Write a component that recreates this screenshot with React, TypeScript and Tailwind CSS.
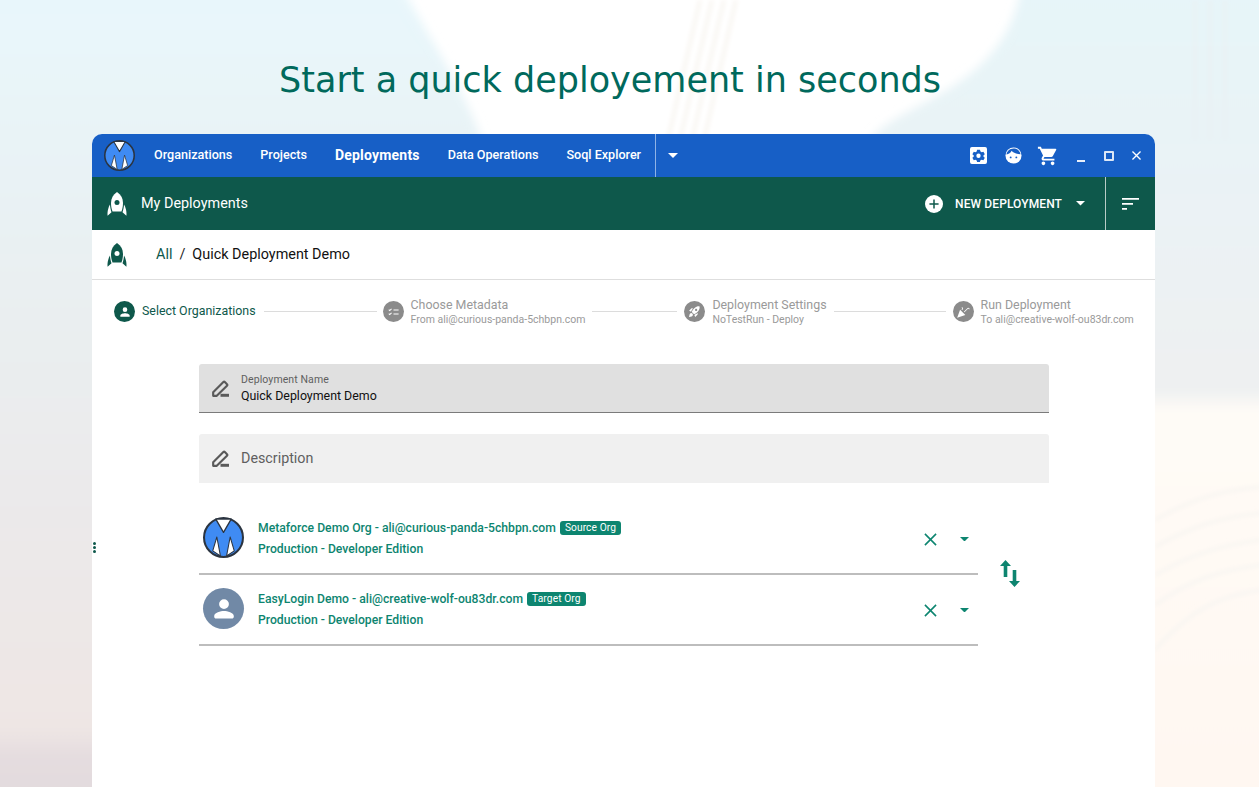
import React from 'react';

const navItems = [
  { label: 'Organizations', active: false },
  { label: 'Projects', active: false },
  { label: 'Deployments', active: true },
  { label: 'Data Operations', active: false },
  { label: 'Soql Explorer', active: false },
];

const Caret = ({ className = '' }: { className?: string }) => (
  <svg viewBox="0 0 10 5" className={className} fill="currentColor">
    <path d="M0 0l5 5 5-5z" />
  </svg>
);

const Logo = ({ className = '' }: { className?: string }) => (
  <svg viewBox="0 0 40 40" className={className}>
    <circle cx="20" cy="20" r="19" fill="#3f8bf3" stroke="#2b3440" strokeWidth="2" />
    <path d="M12.500 2h15L20 15z" fill="#fff" stroke="#2b3440" strokeWidth="1.300" strokeLinejoin="round" />
    <path d="M9.500 33l4-13.500L17 38z" fill="#fff" stroke="#2b3440" strokeWidth="1" strokeLinejoin="round" />
    <path d="M30.500 33l-4-13.500L23 38z" fill="#fff" stroke="#2b3440" strokeWidth="1" strokeLinejoin="round" />
  </svg>
);

const Rocket = ({ className = '', hole }: { className?: string; hole: string }) => (
  <svg viewBox="0 0 20 24" className={className}>
    <path fill="currentColor" d="M10 0c4 2.500 6 6.500 6 11 0 3-.6 6-1.500 8.500h-9C4.600 17 4 14 4 11 4 6.500 6 2.500 10 0z" />
    <path fill="currentColor" d="M3 12.500c.1 2.700.7 5.400 1.500 7.800L.6 23.800c-.3-2.400 0-4.700.6-6.700.4-1.800 1-3.400 1.800-4.600zM17 12.500c.8 1.200 1.400 2.800 1.800 4.600.6 2 .9 4.300.6 6.700l-3.900-3.500c.8-2.400 1.400-5.100 1.500-7.800z" />
    <circle cx="10" cy="10.500" r="2.500" fill={hole} />
  </svg>
);

const PencilIcon = () => (
  <svg viewBox="0 0 16 16" className="w-[17px] h-[17px] text-[#5a5a5a]">
    <path d="M1.100 14.900v-3.400L10.700 1.900a1 1 0 0 1 1.400 0l2 2a1 1 0 0 1 0 1.400L4.500 14.900z" fill="none" stroke="currentColor" strokeWidth="2" strokeLinejoin="round" />
    <path d="M8 13h8v2.800H8z" fill="currentColor" />
  </svg>
);

const Step = ({ icon, title, sub }: { icon: React.ReactNode; title: string; sub: string }) => (
  <div className="flex items-center gap-[7px] shrink-0">
    <div className="w-[21px] h-[21px] rounded-full bg-[#8b8b8b] flex items-center justify-center text-white">{icon}</div>
    <div className="flex flex-col text-[#9a9a9a]">
      <span className="text-[12.4px] leading-[14px]">{title}</span>
      <span className="text-[10.5px] leading-[13px] mt-px">{sub}</span>
    </div>
  </div>
);

const OrgRow = ({
  avatar,
  name,
  tag,
}: {
  avatar: React.ReactNode;
  name: string;
  tag: string;
}) => (
  <div className="h-[71px] border-b-2 border-[#bdbdbd] flex items-center pl-[4px] pb-[2px]">
    <div className="w-[41px] h-[41px] shrink-0">{avatar}</div>
    <div className="ml-[14px] mt-[2px] flex-1 flex flex-col gap-[5px] text-[#0d8570] text-[12.2px] font-medium leading-[16px]">
      <div className="flex items-center gap-[4px]">
        <span>{name}</span>
        <span className="bg-[#0d8570] text-white text-[10.2px] font-normal leading-[14px] px-[5px] rounded-[3px] tracking-[0.1px]">{tag}</span>
      </div>
      <div>Production - Developer Edition</div>
    </div>
    <svg viewBox="0 0 14 14" className="w-[13px] h-[13px] text-[#0d8570] mr-[23px] mt-[4px]" stroke="currentColor" strokeWidth="1.700" fill="none">
      <path d="M1 1l12 12M13 1L1 13" />
    </svg>
    <Caret className="w-[9px] h-[4.500px] text-[#0d8570] mr-[9px] mt-[3px]" />
  </div>
);

export default function App() {
  return (
    <div className="relative w-[1259px] h-[787px] overflow-hidden bg-white font-['Roboto',sans-serif]">
      {/* blurred backdrop */}
      <svg viewBox="0 0 1259 787" className="absolute inset-0 w-full h-full">
        <defs>
          <filter id="b" x="-20%" y="-20%" width="140%" height="140%"><feGaussianBlur stdDeviation="5" /></filter>
          <filter id="s" x="-20%" y="-20%" width="140%" height="140%"><feGaussianBlur stdDeviation="2" /></filter>
          <linearGradient id="left" x1="0" y1="0" x2="0" y2="1">
            <stop offset="0" stopColor="#e8f7fc" />
            <stop offset="0.3" stopColor="#e9f1f3" />
            <stop offset="0.65" stopColor="#ebe9ea" />
            <stop offset="0.91" stopColor="#eee6e4" />
            <stop offset="0.95" stopColor="#e4dcdf" />
            <stop offset="1" stopColor="#e2dadd" />
          </linearGradient>
          <linearGradient id="right" x1="0" y1="0" x2="0" y2="1">
            <stop offset="0" stopColor="#e6f5f9" />
            <stop offset="0.5" stopColor="#eef0f1" />
            <stop offset="0.525" stopColor="#fefbf6" />
            <stop offset="1" stopColor="#fff7f1" />
          </linearGradient>
        </defs>
        <g filter="url(#b)">
          <path d="M-20 -20H398C430 40 465 90 482 140V800H-20z" fill="url(#left)" />
          <path d="M1022 -20H1280V800H870V140C900 100 1010 90 1022 -20z" fill="url(#right)" />
        </g>
        <g filter="url(#s)" fill="none" stroke="#f9f6f2" strokeWidth="4">
          <path d="M700 0L668 140M712 0L680 140M724 0L692 140M736 0L704 140" />
          <path d="M1155 520C1190 500 1220 490 1262 487M1155 547C1190 527 1220 517 1262 513M1155 575C1190 555 1220 545 1262 540M1155 605C1190 580 1220 570 1262 565M1155 650C1190 610 1220 595 1262 590" />
          <path d="M1195 0V140M1210 0V140M1225 0V140" stroke="#e9f1f4" />
        </g>
      </svg>

      <div className="relative">
        <h1 className="h-[134px] pt-[55px] pl-[279px] font-['DejaVu_Sans',sans-serif] text-[35px] leading-[50px] text-[#00695c] font-normal">
          Start a quick deployement in seconds
        </h1>

        <div className="relative ml-[92px] w-[1063px] h-[653px] bg-white rounded-t-[10px]">
          {/* app bar */}
          <div className="h-[43px] bg-[#175fc6] rounded-t-[10px] flex items-center text-white">
            <Logo className="w-[31px] h-[31px] ml-[12px] shrink-0" />
            <nav className="flex items-center ml-[19px] gap-[28px] text-[12.6px] font-medium">
              {navItems.map((item) => (
                <a key={item.label} className={item.active ? 'text-[14px] font-bold tracking-[0.2px]' : ''}>
                  {item.label}
                </a>
              ))}
            </nav>
            <div className="w-px h-[43px] bg-[#8fb3e6] ml-[14px]" />
            <Caret className="w-[10px] h-[5px] ml-[12px]" />
            <div className="ml-auto flex items-center pr-[14px]">
              <svg viewBox="0 0 18 18" className="w-[17px] h-[17px] mr-[18px]" fill="currentColor">
                <path fillRule="evenodd" d="M2 0h14a2 2 0 0 1 2 2v14a2 2 0 0 1-2 2H2a2 2 0 0 1-2-2V2a2 2 0 0 1 2-2zm5.500 3l-.4 1.800-1.300.8-1.800-.6-1.500 2.600 1.400 1.200v1.400L2.500 11.400 4 14l1.800-.6 1.300.8.400 1.800h3l.4-1.800 1.300-.8L14.200 14l1.500-2.600-1.400-1.200V8.800l1.400-1.200L14.200 5l-1.800.6-1.300-.8L10.500 3zM9 7a2.300 2.300 0 1 1 0 4.600A2.300 2.300 0 0 1 9 7z" />
              </svg>
              <svg viewBox="0 0 18 18" className="w-[17px] h-[17px] mr-[15px]">
                <circle cx="9" cy="9" r="8.500" fill="#fff" />
                <path d="M1.500 8C4 7.500 6 6.200 7 4c2 2.300 5.500 3.700 9.500 3.700C15.500 3.500 12.500 1.500 9 1.500 5 1.500 2 4.500 1.500 8z" fill="#175fc6" />
                <circle cx="6" cy="11" r="1" fill="#175fc6" />
                <circle cx="12" cy="11" r="1" fill="#175fc6" />
              </svg>
              <svg viewBox="0 0 24 24" className="w-[22px] h-[22px] mr-[18px]" fill="currentColor">
                <path d="M7 18c-1.100 0-1.990.9-1.990 2S5.900 22 7 22s2-.9 2-2-.9-2-2-2zM1 2v2h2l3.600 7.590-1.350 2.450c-.16.280-.25.610-.25.960 0 1.100.9 2 2 2h12v-2H7.420c-.14 0-.25-.11-.25-.25l.03-.12.9-1.630h7.450c.75 0 1.410-.41 1.750-1.030l3.580-6.490A1 1 0 0 0 20 4H5.210l-.94-2H1zm16 16c-1.100 0-1.990.9-1.990 2s.89 2 1.990 2 2-.9 2-2-.9-2-2-2z" />
              </svg>
              <div className="w-[8px] h-[2px] bg-white mt-[11px] mr-[19px] opacity-90" />
              <div className="w-[10px] h-[10px] border-2 border-white/85 rounded-[1px] mr-[18px]" />
              <svg viewBox="0 0 10 10" className="w-[9px] h-[9px]" stroke="currentColor" strokeWidth="1.500" fill="none">
                <path d="M.5.5l9 9M9.500.5l-9 9" />
              </svg>
            </div>
          </div>

          {/* section bar */}
          <div className="h-[53px] bg-[#0e584b] flex items-center text-white">
            <Rocket className="w-[20px] h-[24px] ml-[15px]" hole="#0e584b" />
            <span className="ml-[14px] text-[14.4px]">My Deployments</span>
            <div className="ml-auto flex items-center h-full">
              <div className="w-[18px] h-[18px] rounded-full bg-white text-[#0e584b] flex items-center justify-center">
                <svg viewBox="0 0 12 12" className="w-[10px] h-[10px]" stroke="currentColor" strokeWidth="1.800"><path d="M6 .5v11M.5 6h11" /></svg>
              </div>
              <span className="ml-[12px] text-[12px] font-medium tracking-[0.1px]">NEW DEPLOYMENT</span>
              <Caret className="w-[9px] h-[4.500px] ml-[14px]" />
              <div className="w-px h-full bg-[#b8cbc6] ml-[20px]" />
              <svg viewBox="0 0 17 12" className="w-[17px] h-[12px] mx-[16px]" fill="currentColor">
                <path d="M0 0h17v1.700H0zM0 5h11v1.700H0zM0 10h5v1.700H0z" />
              </svg>
            </div>
          </div>

          {/* breadcrumb */}
          <div className="h-[50px] border-b border-[#dedede] flex items-center">
            <Rocket className="w-[20px] h-[24px] ml-[15px] text-[#0e584b]" hole="#ffffff" />
            <a className="ml-[29px] text-[14.4px] text-[#0e584b]">All</a>
            <span className="ml-[7px] text-[14.4px] text-[#222]">/</span>
            <span className="ml-[7px] text-[14.4px] text-[#111]">Quick Deployment Demo</span>
          </div>

          {/* stepper */}
          <div className="flex items-center h-[63px] pl-[22px]">
            <div className="flex items-center gap-[7px] shrink-0">
              <div className="w-[21px] h-[21px] rounded-full bg-[#0e584b] flex items-center justify-center">
                <svg viewBox="0 0 24 24" className="w-[14px] h-[14px] text-white" fill="currentColor">
                  <path d="M12 12a4 4 0 1 0 0-8 4 4 0 0 0 0 8zm0 2c-2.700 0-8 1.300-8 4v2h16v-2c0-2.700-5.300-4-8-4z" />
                </svg>
              </div>
              <span className="text-[12.4px] text-[#0e584b]">Select Organizations</span>
            </div>
            <div className="w-[113px] h-px bg-[#dcdcdc] ml-[8px] mr-[6px]" />
            <Step
              title="Choose Metadata"
              sub="From ali@curious-panda-5chbpn.com"
              icon={
                <svg viewBox="0 0 14 10" className="w-[11px] h-[8px]" stroke="currentColor" strokeWidth="1.300" fill="none">
                  <path d="M1 2l1.200 1.200L4.500 1M1 7l1.200 1.200L4.500 6M7 2.500h6.500M7 7.500h6.500" />
                </svg>
              }
            />
            <div className="w-[85px] h-px bg-[#dcdcdc] mx-[7px]" />
            <Step
              title="Deployment Settings"
              sub="NoTestRun - Deploy"
              icon={
                <svg viewBox="0 0 24 24" className="w-[13px] h-[13px]" fill="currentColor">
                  <path d="M9.190 6.350c-2.040 2.290-3.440 5.580-3.570 5.890L2 10.690l4.050-4.050c.47-.47 1.150-.68 1.810-.55l1.330.26zM11.170 17s3.740-1.550 5.890-3.700c5.400-5.400 4.500-9.620 4.210-10.570-.95-.3-5.170-1.190-10.570 4.210C8.550 9.090 7 12.830 7 12.830L11.170 17zm6.480-2.190c-2.290 2.040-5.580 3.440-5.890 3.570L13.310 22l4.050-4.050c.47-.47.68-1.150.55-1.810l-.26-1.330zM9 18c0 .83-.34 1.580-.88 2.120C6.940 21.300 2 22 2 22s.7-4.940 1.880-6.120A2.996 2.996 0 0 1 9 18zm4-9c0-1.100.9-2 2-2s2 .9 2 2-.9 2-2 2-2-.9-2-2z" />
                </svg>
              }
            />
            <div className="w-[112px] h-px bg-[#dcdcdc] mx-[7px]" />
            <Step
              title="Run Deployment"
              sub="To ali@creative-wolf-ou83dr.com"
              icon={
                <svg viewBox="0 0 24 24" className="w-[14px] h-[14px]" fill="currentColor">
                  <path d="M2 22l5-14 9 9zM14.530 12.530l5.590-5.590c.49-.49 1.280-.49 1.770 0l.59.59 1.060-1.060-.59-.59a2.758 2.758 0 0 0-3.890 0l-5.590 5.590zM10.060 6.940l-.59.59 1.060 1.060.59-.59c1.080-1.080 1.080-2.810 0-3.890l-.59-.59-1.060 1.060.59.590c.48.470.48 1.270 0 1.770z" />
                </svg>
              }
            />
          </div>

          {/* form */}
          <div className="pl-[107px] pr-[106px] pt-[21px]">
            <div className="h-[49px] bg-[#e0e0e0] border-b border-[#7b7b7b] rounded-t-[3px] flex items-center pl-[13px]">
              <PencilIcon />
              <div className="ml-[12px] flex flex-col">
                <span className="text-[10.5px] leading-[13px] text-[#5f5f5f] tracking-[0.1px]">Deployment Name</span>
                <span className="text-[12.4px] leading-[17px] mt-[1px] text-[#111]">Quick Deployment Demo</span>
              </div>
            </div>
            <div className="h-[49px] mt-[21px] bg-[#f0f0f0] rounded-t-[3px] flex items-center pl-[13px]">
              <PencilIcon />
              <span className="ml-[12px] text-[14.3px] text-[#5f5f5f]">Description</span>
            </div>

            <div className="flex mt-[21px]">
              <div className="w-[779px]">
                <OrgRow
                  avatar={<Logo className="w-[41px] h-[41px]" />}
                  name="Metaforce Demo Org - ali@curious-panda-5chbpn.com"
                  tag="Source Org"
                />
                <OrgRow
                  avatar={
                    <div className="w-[41px] h-[41px] rounded-full bg-[#7189a6] flex items-center justify-center">
                      <svg viewBox="0 0 24 24" className="w-[28px] h-[28px] text-white" fill="currentColor">
                        <path d="M12 12a4.200 4.200 0 1 0 0-8.400 4.200 4.200 0 0 0 0 8.400zm0 1.800c-2.800 0-8.400 1.400-8.400 4.200v.6c0 .9.700 1.600 1.600 1.600h13.600c.9 0 1.600-.7 1.600-1.600V18c0-2.800-5.600-4.200-8.400-4.200z" />
                      </svg>
                    </div>
                  }
                  name="EasyLogin Demo - ali@creative-wolf-ou83dr.com"
                  tag="Target Org"
                />
              </div>
              <div className="ml-[22px] mt-[56px]">
                <svg viewBox="0 0 20 27" className="w-[20px] h-[27px] text-[#0d8570]" fill="currentColor">
                  <path d="M5.500 0L11 6H7.300v11H3.700V6H0zM14.500 27L9 21h3.700V10h3.600v11H20z" />
                </svg>
              </div>
            </div>
          </div>

          {/* drag handle */}
          <div className="absolute left-px top-[408px] flex flex-col gap-[1px]">
            <span className="w-[3px] h-[3px] rounded-full bg-[#0e584b]" />
            <span className="w-[3px] h-[3px] rounded-full bg-[#0e584b]" />
            <span className="w-[3px] h-[3px] rounded-full bg-[#0e584b]" />
          </div>
        </div>
      </div>
    </div>
  );
}
